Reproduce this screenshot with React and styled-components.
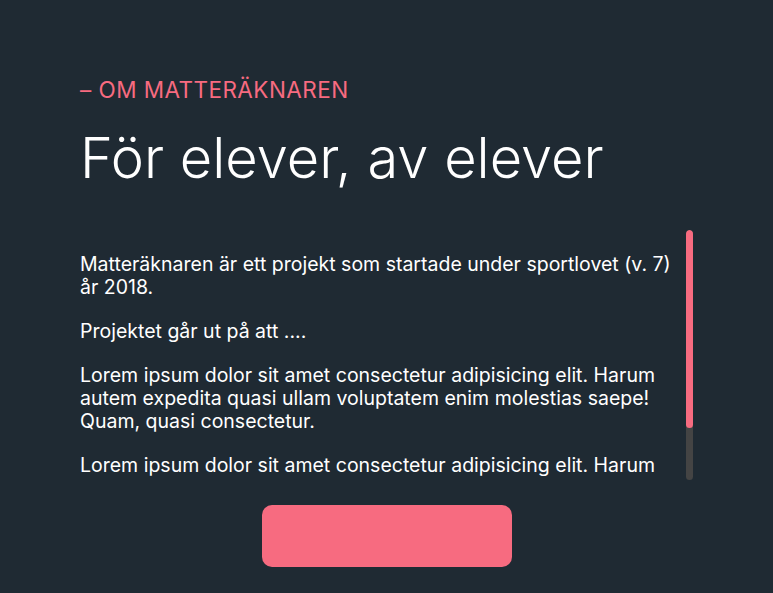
import React from 'react';
import styled, { createGlobalStyle } from 'styled-components';

const GlobalStyle = createGlobalStyle`
  html, body {
    margin: 0;
    padding: 0;
    background: #1f2a33;
  }
  body {
    font-family: Inter, "Noto Sans", sans-serif;
    color: #ffffff;
  }
`;

const Page = styled.section`
  box-sizing: border-box;
  min-height: 100vh;
  padding: 77px 80px 0;
  display: flex;
  flex-direction: column;
`;

const Eyebrow = styled.p`
  margin: 0;
  font-size: 22.5px;
  line-height: 26px;
  font-weight: 400;
  letter-spacing: 0.45px;
  color: #f76b80;
`;

const Title = styled.h1`
  margin: 22px 0 0;
  font-size: 56px;
  line-height: 66px;
  font-weight: 300;
  color: #ffffff;
`;

const Reader = styled.div`
  margin-top: 39px;
  height: 250px;
  display: flex;
  gap: 6px;
`;

const ScrollBox = styled.div`
  box-sizing: border-box;
  flex: 1;
  height: 100%;
  overflow: hidden;
  padding: 23px 6px 20px 0;
`;

const Track = styled.div`
  flex: 0 0 7px;
  display: flex;
  flex-direction: column;
  background: #444444;
  border-radius: 4px;
  overflow: hidden;
`;

const Thumb = styled.div`
  height: ${(p) => p.$size}%;
  background: #f76b80;
  border-radius: 4px;
`;

const Paragraph = styled.p`
  margin: 0 0 21px;
  font-size: 19.5px;
  line-height: 23px;
  color: #ffffff;

  &:last-child {
    margin-bottom: 0;
  }
`;

const Button = styled.button`
  align-self: center;
  margin-top: 25px;
  width: 250px;
  height: 62px;
  border: none;
  border-radius: 10px;
  background: #f76b80;
  cursor: pointer;
`;

const lorem =
  'Lorem ipsum dolor sit amet consectetur adipisicing elit. Harum autem expedita quasi ullam voluptatem enim molestias saepe! Quam, quasi consectetur.';

export default function App() {
  return (
    <>
      <GlobalStyle />
      <Page>
        <Eyebrow>– OM MATTERÄKNAREN</Eyebrow>
        <Title>För elever, av elever</Title>
        <Reader>
          <ScrollBox>
            <Paragraph>
              Matteräknaren är ett projekt som startade under sportlovet (v. 7) år 2018.
            </Paragraph>
            <Paragraph>Projektet går ut på att ....</Paragraph>
            <Paragraph>{lorem}</Paragraph>
            <Paragraph>{lorem}</Paragraph>
          </ScrollBox>
          <Track>
            <Thumb $size={79} />
          </Track>
        </Reader>
        <Button aria-label="Läs mer" />
      </Page>
    </>
  );
}
